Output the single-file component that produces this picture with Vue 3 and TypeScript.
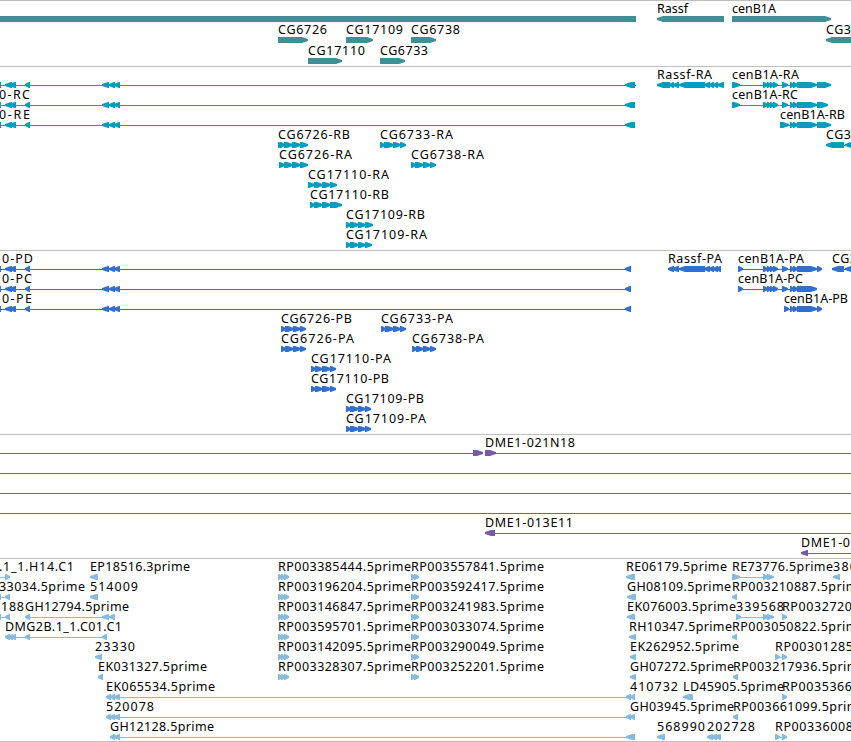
<script setup lang="ts">
type Exon = [number, number]
type Label = [text: string, x: number, width: number]

interface Feature {
  row: number
  dir?: 'l' | 'r' | 'none'
  label?: Label
  exons?: Exon[]
  line?: [number, number]
}

interface Track {
  name: string
  height: number
  pitch: number
  color: string
  features: Feature[]
}

const END = 860

// exons shared by all isoforms of the long gene on the left
const longGene: Exon[] = [[-5, 1], [5, 12], [9, 16], [25, 30], [102, 109], [109, 115], [114, 120]]
const cenStart: Exon[] = [[763, 768], [767, 771], [770, 774], [773, 778], [782, 788]]
const cenMid: Exon[] = [[790, 794], [793, 798]]

// four consecutive exons, the arrow heads reaching into the next one
function four(a: number, b: number, c: number, d: number, end: number): Exon[] {
  return [[a, b + 1], [b, c + 1], [c, d + 1], [d, end]]
}

const genes: Feature[] = [
  { row: 0, dir: 'none', exons: [[-5, 636]] },
  { row: 0, dir: 'l', label: ['Rassf', 657, 31], exons: [[657, 724]] },
  { row: 0, label: ['cenB1A', 732, 44], exons: [[732, 831]] },
  { row: 1, label: ['CG6726', 278, 49], exons: [[278, 308]] },
  { row: 1, label: ['CG17109', 346, 57], exons: [[346, 373]] },
  { row: 1, label: ['CG6738', 411, 49], exons: [[411, 436]] },
  { row: 1, dir: 'l', label: ['CG3', 826, 25], exons: [[826, END]] },
  { row: 2, label: ['CG17110', 308, 57], exons: [[308, 342]] },
  { row: 2, label: ['CG6733', 380, 48], exons: [[380, 405]] },
]

const transcripts: Feature[] = [
  { row: 0, dir: 'l', exons: [...longGene, [625, 635]], line: [0, 636] },
  { row: 1, dir: 'l', label: ['0-RC', -1, 31], exons: [...longGene, [625, 635]], line: [0, 635] },
  { row: 2, dir: 'l', label: ['0-RE', -1, 31], exons: [...longGene, [625, 635]], line: [0, 635] },
  { row: 0, dir: 'l', label: ['Rassf-RA', 657, 55], exons: [[657, 670], [669, 674], [673, 679], [679, 705], [704, 710], [709, 714], [713, 718], [717, 724]] },
  { row: 0, label: ['cenB1A-RA', 732, 67], exons: [[732, 740], ...cenStart, ...cenMid, [797, 817], [817, 831]] },
  { row: 1, label: ['cenB1A-RC', 732, 66], exons: [[732, 740], ...cenStart, ...cenMid, [797, 817], [817, 828]] },
  { row: 2, label: ['cenB1A-RB', 780, 65], exons: [[780, 789], ...cenMid, [797, 817], [817, 831]] },
  { row: 3, dir: 'l', label: ['CG3', 826, 25], exons: [[826, 844], [845, END]] },
  { row: 3, label: ['CG6726-RB', 278, 72], exons: [[278, 282], ...four(280, 284, 292, 300, 308)] },
  { row: 4, label: ['CG6726-RA', 279, 73], exons: four(279, 284, 292, 300, 308) },
  { row: 3, label: ['CG6733-RA', 380, 73], exons: four(380, 384, 393, 400, 406) },
  { row: 4, label: ['CG6738-RA', 411, 73], exons: four(411, 415, 423, 430, 436) },
  { row: 5, label: ['CG17110-RA', 308, 81], exons: four(308, 314, 322, 330, 337) },
  { row: 6, label: ['CG17110-RB', 310, 79], exons: four(310, 314, 322, 330, 342) },
  { row: 7, label: ['CG17109-RB', 346, 79], exons: four(346, 350, 358, 365, 373) },
  { row: 8, label: ['CG17109-RA', 346, 81], exons: four(346, 350, 358, 365, 372) },
]

const proteins: Feature[] = [
  { row: 0, dir: 'l', label: ['0-PD', 2, 31], exons: [...longGene, [625, 631]] },
  { row: 1, dir: 'l', label: ['0-PC', 2, 30], exons: [...longGene, [625, 631]] },
  { row: 2, dir: 'l', label: ['0-PE', 2, 30], exons: [...longGene, [625, 631]] },
  { row: 0, dir: 'l', label: ['Rassf-PA', 668, 54], exons: [[668, 674], [672, 679], [679, 705], [704, 710], [709, 714], [713, 718], [716, 721]] },
  { row: 0, label: ['cenB1A-PA', 738, 66], exons: [[738, 743], ...cenStart, ...cenMid, [797, 817], [817, 822]] },
  { row: 1, label: ['cenB1A-PC', 738, 65], exons: [[738, 743], ...cenStart, ...cenMid, [797, 817]] },
  { row: 2, label: ['cenB1A-PB', 784, 64], exons: [[784, 789], ...cenMid, [797, 817], [817, 822]] },
  { row: 0, dir: 'l', label: ['CG3', 832, 25], exons: [[832, 844], [845, END]] },
  { row: 3, label: ['CG6726-PB', 281, 71], exons: four(281, 285, 293, 300, 306) },
  { row: 4, label: ['CG6726-PA', 281, 73], exons: four(281, 285, 293, 300, 306) },
  { row: 3, label: ['CG6733-PA', 381, 72], exons: four(381, 385, 393, 400, 406) },
  { row: 4, label: ['CG6738-PA', 412, 72], exons: four(412, 416, 423, 430, 436) },
  { row: 5, label: ['CG17110-PA', 311, 80], exons: four(311, 315, 322, 330, 336) },
  { row: 6, label: ['CG17110-PB', 311, 78], exons: four(311, 315, 322, 330, 336) },
  { row: 7, label: ['CG17109-PB', 346, 78], exons: four(346, 350, 358, 365, 371) },
  { row: 8, label: ['CG17109-PA', 346, 80], exons: four(346, 350, 358, 365, 371) },
]

const bacs: Feature[] = [
  { row: 0, exons: [[473, 483]], line: [0, 483] },
  { row: 0, label: ['DME1-021N18', 485, 90], exons: [[485, 496]], line: [485, END] },
  { row: 1, line: [0, END] },
  { row: 2, line: [0, END] },
  { row: 3, line: [0, END] },
  { row: 4, dir: 'l', label: ['DME1-013E11', 485, 88], exons: [[485, 495]], line: [485, END] },
  { row: 5, dir: 'l', label: ['DME1-0', 801, 49], exons: [[801, 808]], line: [801, END] },
]

// the two stacks of 5' reads in the middle of the region
const readNames = [
  ['RP003385444.5prime', 'RP003557841.5prime'],
  ['RP003196204.5prime', 'RP003592417.5prime'],
  ['RP003146847.5prime', 'RP003241983.5prime'],
  ['RP003595701.5prime', 'RP003033074.5prime'],
  ['RP003142095.5prime', 'RP003290049.5prime'],
  ['RP003328307.5prime', 'RP003252201.5prime'],
]
const reads = readNames.flatMap(([a, b], row): Feature[] => [
  { row, label: [a, 278, 133], exons: [[278, 282], [281, 285], [284, 289]] },
  { row, label: [b, 411, 133], exons: [[411, 415], [414, 419]] },
])

const ests: Feature[] = [
  ...reads,
  { row: 0, label: ['.1_1.H14.C1', -1, 75], exons: [[5, 10]], line: [0, 10] },
  { row: 1, dir: 'l', label: ['33034.5prime', -1, 86], exons: [[-5, 1], [5, 10]] },
  { row: 2, dir: 'l', label: ['188', 1, 23], exons: [[-5, 1], [5, 10]] },
  { row: 0, dir: 'l', label: ['EP18516.3prime', 90, 100], exons: [[90, 98]] },
  { row: 1, dir: 'l', label: ['514009', 90, 48], exons: [[90, 98]] },
  { row: 2, dir: 'l', label: ['GH12794.5prime', 25, 104], exons: [[25, 30], [102, 109], [109, 115]] },
  { row: 3, dir: 'l', label: ['DMG2B.1_1.C01.C1', 5, 117], exons: [[5, 10], [9, 13], [12, 16], [25, 30], [102, 107]] },
  { row: 4, dir: 'l', label: ['23330', 95, 40], exons: [[95, 102]] },
  { row: 5, dir: 'l', label: ['EK031327.5prime', 98, 109], exons: [[98, 103]] },
  { row: 6, dir: 'l', label: ['EK065534.5prime', 106, 109], exons: [[106, 111], [110, 115], [114, 120], [626, 631], [630, 635]] },
  { row: 7, dir: 'l', label: ['520078', 106, 48], exons: [[106, 111], [110, 115], [114, 120], [626, 631], [630, 635]] },
  { row: 8, dir: 'l', label: ['GH12128.5prime', 110, 104], exons: [[110, 115], [114, 120], [626, 635]] },
  { row: 0, dir: 'l', label: ['RE06179.5prime', 626, 101], exons: [[626, 635]] },
  { row: 1, dir: 'l', label: ['GH08109.5prime', 627, 104], exons: [[627, 636]] },
  { row: 2, dir: 'l', label: ['EK076003.5prime', 627, 109], exons: [[627, 635]] },
  { row: 3, dir: 'l', label: ['RH10347.5prime', 629, 103], exons: [[629, 636]] },
  { row: 4, dir: 'l', label: ['EK262952.5prime', 630, 109], exons: [[630, 636]] },
  { row: 5, dir: 'l', label: ['GH07272.5prime', 630, 104], exons: [[630, 636]] },
  { row: 6, label: ['410732', 630, 48] },
  { row: 7, label: ['GH03945.5prime', 630, 104] },
  { row: 8, dir: 'l', label: ['568990', 657, 48], exons: [[657, 665]] },
  { row: 8, dir: 'l', label: ['202728', 707, 48], exons: [[707, 713], [711, 717], [715, 721]] },
  { row: 6, dir: 'l', label: ['LD45905.5prime', 683, 101], exons: [[683, 693]] },
  { row: 0, label: ['RE73776.5prime', 732, 101], exons: [[732, 740], [763, 768], [767, 774]] },
  { row: 0, dir: 'l', label: ['380', 833, 24], exons: [[833, 840]] },
  { row: 1, dir: 'l', label: ['RP003210887.5prime', 732, 133], exons: [[732, 737]] },
  { row: 2, label: ['339568', 736, 48], exons: [[736, 741], [763, 768], [767, 774]] },
  { row: 2, label: ['RP0032720', 782, 70], exons: [[782, 787]] },
  { row: 3, dir: 'l', label: ['RP003050822.5prime', 732, 133], exons: [[732, 737]] },
  { row: 4, label: ['RP00301285', 775, 78], exons: [[775, 780], [782, 787]] },
  { row: 5, dir: 'l', label: ['RP003217936.5prime', 733, 133], exons: [[733, 738]] },
  { row: 6, label: ['RP0035366', 782, 70], exons: [[782, 787]] },
  { row: 7, dir: 'l', label: ['RP003661099.5prime', 733, 133], exons: [[733, 738]] },
  { row: 8, label: ['RP00336008', 775, 78], exons: [[775, 780], [782, 787]] },
]

const tracks: Track[] = [
  { name: 'genes', height: 66, pitch: 21, color: '#3f8f94', features: genes },
  { name: 'transcripts', height: 184, pitch: 20, color: '#009dbf', features: transcripts },
  { name: 'proteins', height: 184, pitch: 20, color: '#336fcf', features: proteins },
  { name: 'bacs', height: 124, pitch: 20, color: '#775aa8', features: bacs },
  { name: 'ests', height: 183, pitch: 20, color: '#87bbdd', features: ests },
]

function extent(f: Feature): [number, number] {
  if (f.line) return f.line
  const ex = f.exons || []
  return ex.length > 1 ? [ex[0][0], ex[ex.length - 1][1]] : [0, 0]
}

// block with a blunt rounded head in the direction of the strand
function exonPoints([x1, x2]: Exon, top: number, dir = 'r') {
  const bottom = top + 6
  if (dir === 'none') return `${x1},${top} ${x2},${top} ${x2},${bottom} ${x1},${bottom}`
  const head = Math.min(x2 - x1 - 1, 6)
  const [tail, tip, sign] = dir === 'l' ? [x2, x1, 1] : [x1, x2, -1]
  const neck = tip + sign * head
  const shoulder = tip + sign * head * 0.5
  return [
    [tail, top], [neck, top], [shoulder, top + 1], [tip, top + 2],
    [tip, bottom - 2], [shoulder, bottom - 1], [neck, bottom], [tail, bottom],
  ].map(p => p.join(',')).join(' ')
}
</script>

<template>
  <main class="viewer">
    <section v-for="track in tracks" :key="track.name" class="track">
      <svg class="features" width="851" :height="track.height - 1" :viewBox="`0 1 851 ${track.height - 1}`">
        <g v-for="(f, i) in track.features" :key="i" :fill="track.color">
          <rect :x="extent(f)[0]" :y="19 + f.row * track.pitch" :width="extent(f)[1] - extent(f)[0]" height="1" />
          <polygon v-for="(exon, n) in f.exons" :key="n" :points="exonPoints(exon, 16 + f.row * track.pitch, f.dir)" />
          <text v-if="f.label" class="label" :x="f.label[1]" :y="13 + f.row * track.pitch" :textLength="f.label[2]">{{ f.label[0] }}</text>
        </g>
      </svg>
    </section>
  </main>
</template>

<style scoped>
.viewer {
  width: 851px;
  height: 742px;
  box-sizing: border-box;
  display: flex;
  flex-direction: column;
  overflow: hidden;
  background: #fff;
  border-bottom: 1px solid #bebebe;
}
.track {
  flex: none;
  border-top: 1px solid #bebebe;
}
.features {
  display: block;
  overflow: hidden;
}
.label {
  font-family: "Noto Sans", "DejaVu Sans", sans-serif;
  font-size: 12.5px;
  fill: #000;
}
</style>
